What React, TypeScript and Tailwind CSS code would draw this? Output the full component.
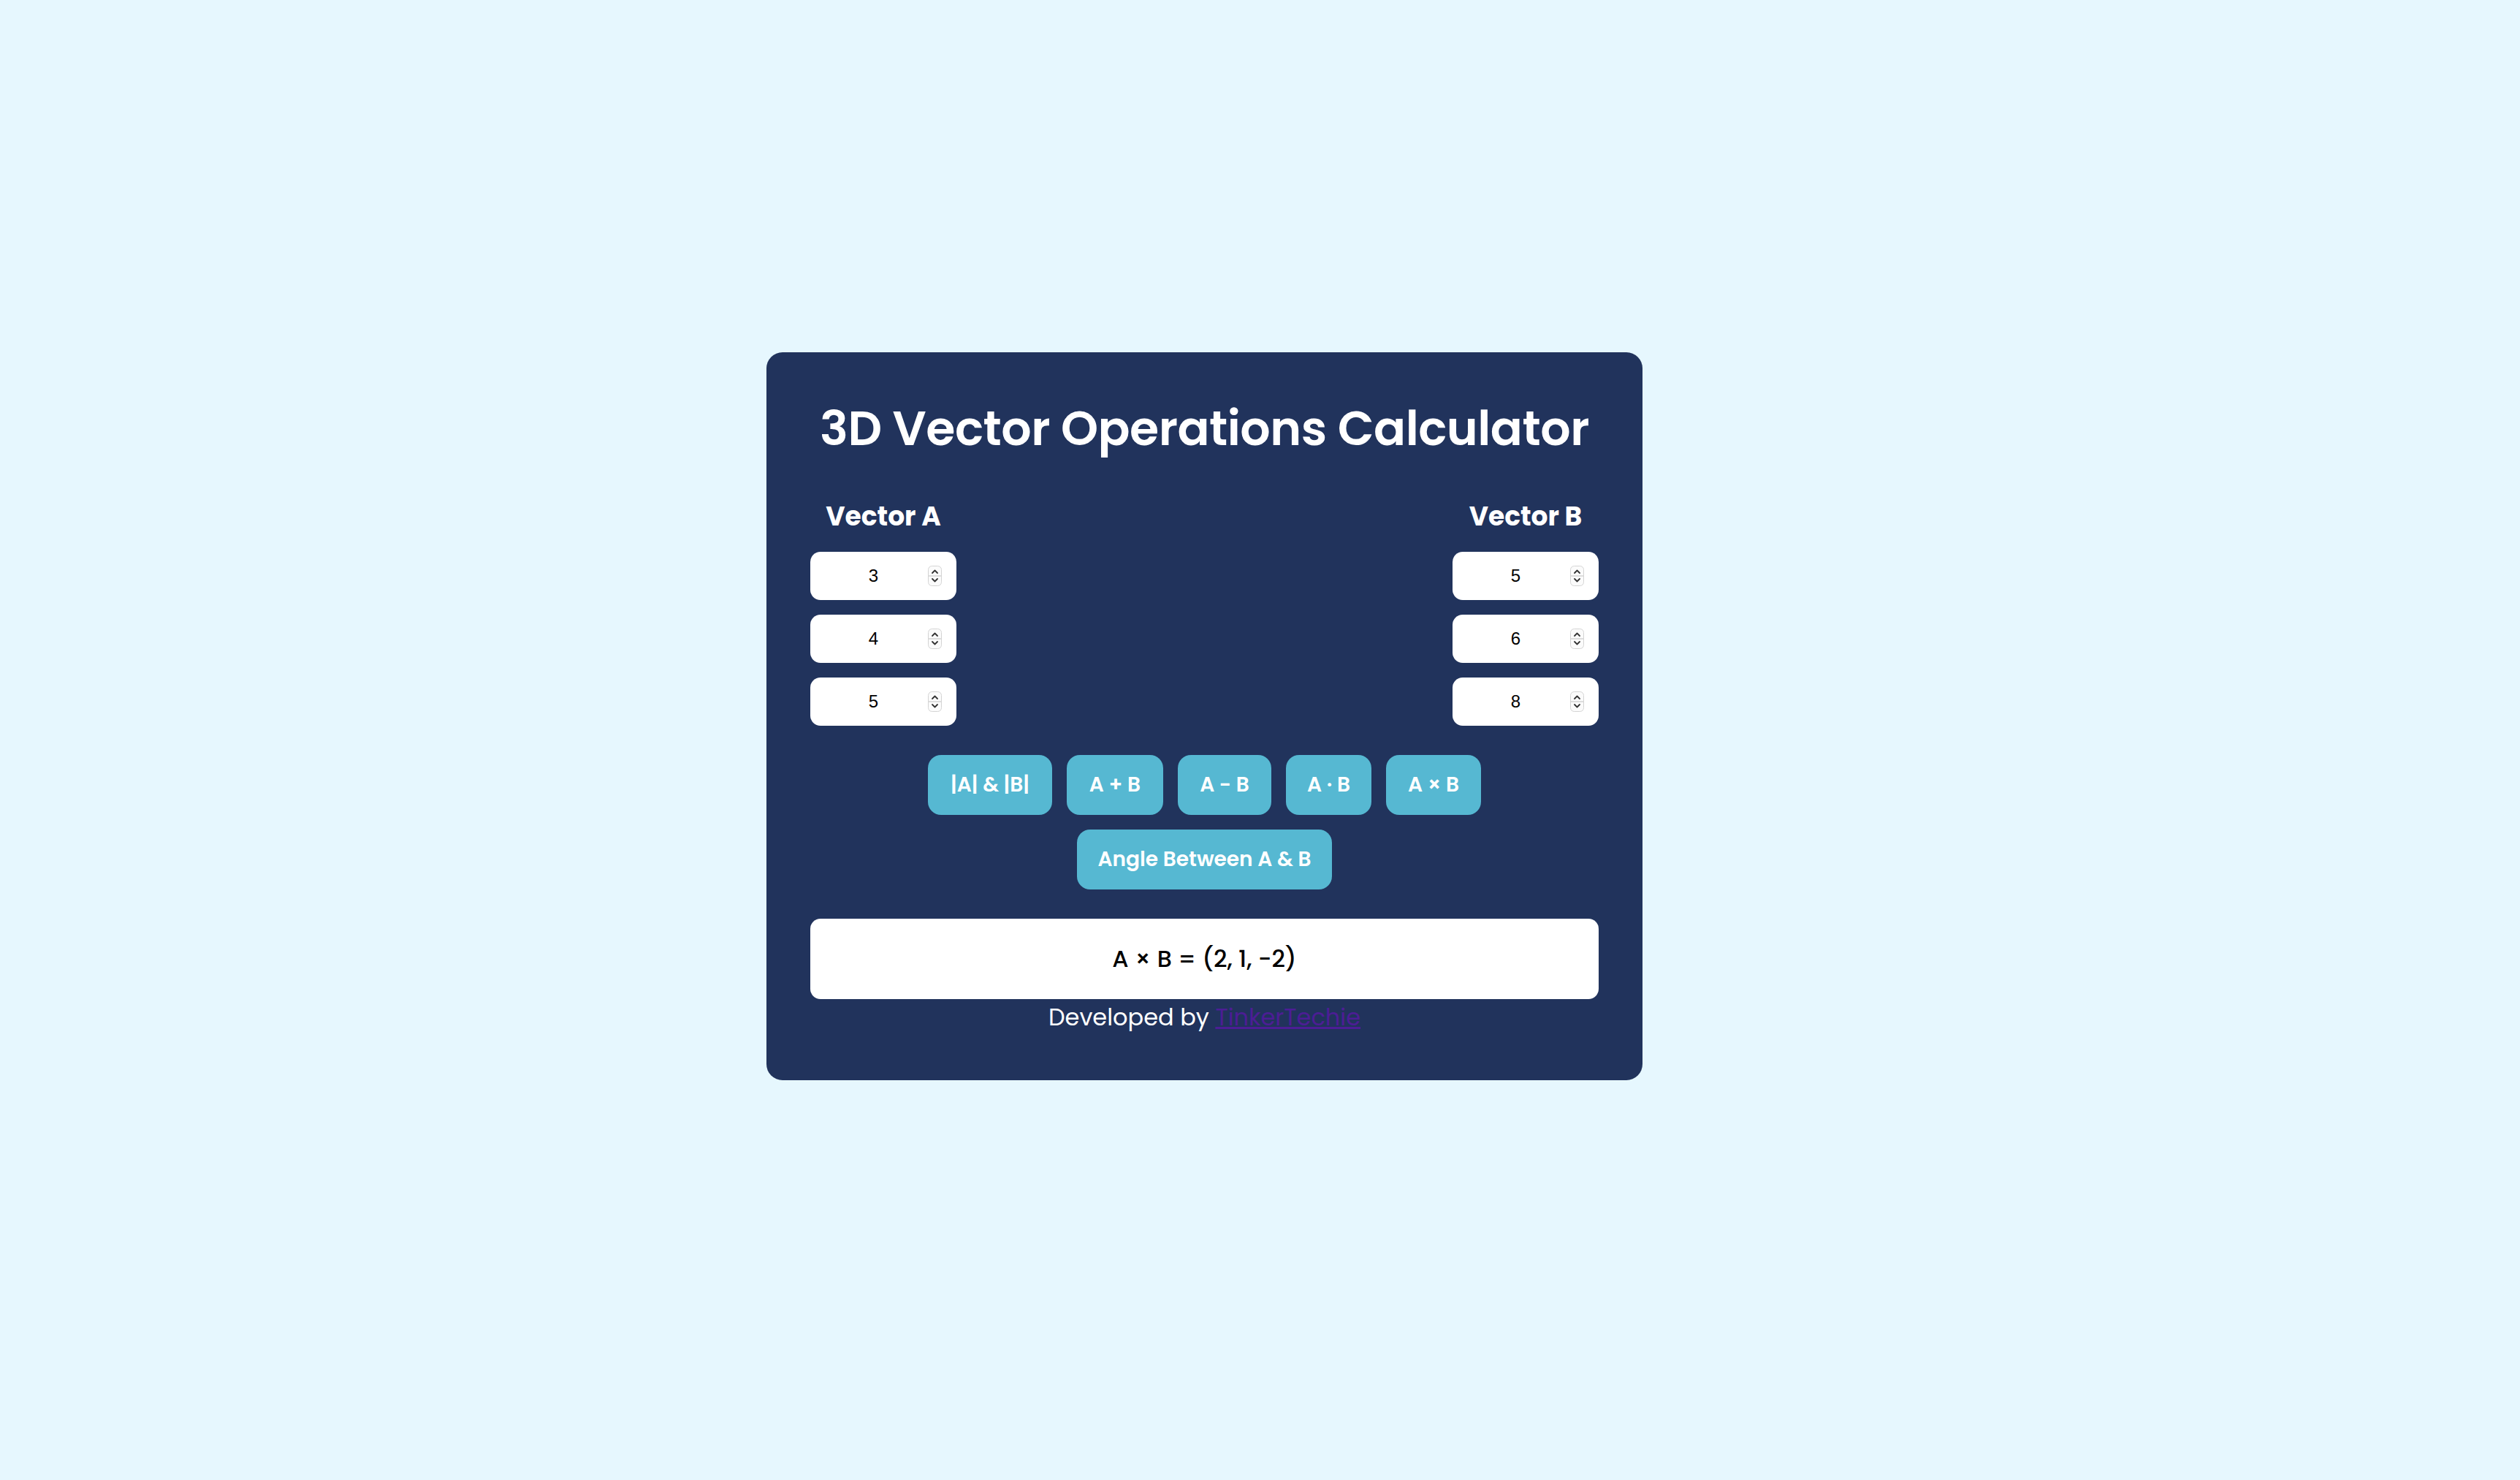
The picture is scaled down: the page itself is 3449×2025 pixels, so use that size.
import { useState } from "react";

type Vec = [number, number, number];

function Spinner() {
  return (
    <svg width="19" height="28" viewBox="0 0 19 28" className="shrink-0">
      <rect x="0.5" y="0.5" width="18" height="27" rx="5" fill="#fbfbfb" stroke="#d4d4d4" />
      <line x1="1" y1="14" x2="18" y2="14" stroke="#d4d4d4" strokeWidth="1.5" />
      <path d="M6 10 L9.5 6.5 L13 10" fill="none" stroke="#333" strokeWidth="1.8" strokeLinecap="round" strokeLinejoin="round" />
      <path d="M6 18 L9.5 21.5 L13 18" fill="none" stroke="#333" strokeWidth="1.8" strokeLinecap="round" strokeLinejoin="round" />
    </svg>
  );
}

function NumberBox({ value, onChange }: { value: string; onChange: (v: string) => void }) {
  return (
    <div className="flex h-[66px] w-[200px] items-center rounded-[14px] bg-white pl-[12px] pr-[20px]">
      <input
        type="text"
        inputMode="numeric"
        value={value}
        onChange={(e) => onChange(e.target.value)}
        className="w-0 flex-1 bg-transparent text-center font-['Liberation_Sans',Arial,sans-serif] text-[24px] text-black outline-none"
      />
      <Spinner />
    </div>
  );
}

function VectorColumn({
  label,
  values,
  onChange,
}: {
  label: string;
  values: string[];
  onChange: (i: number, v: string) => void;
}) {
  return (
    <div className="flex w-[200px] flex-col items-center">
      <h3 className="h-[43px] text-[36px] font-bold leading-[45px] text-white">{label}</h3>
      <div className="mt-[28px] flex flex-col gap-[20px]">
        {values.map((v, i) => (
          <NumberBox key={i} value={v} onChange={(nv) => onChange(i, nv)} />
        ))}
      </div>
    </div>
  );
}

const fmt = (n: number) => String(Math.round(n * 100) / 100);

export default function App() {
  const [a, setA] = useState(["3", "4", "5"]);
  const [b, setB] = useState(["5", "6", "8"]);
  const [result, setResult] = useState("A × B = (2, 1, -2)");

  const va = a.map(Number) as Vec;
  const vb = b.map(Number) as Vec;
  const mag = (v: Vec) => Math.sqrt(v[0] * v[0] + v[1] * v[1] + v[2] * v[2]);
  const dot = va[0] * vb[0] + va[1] * vb[1] + va[2] * vb[2];

  const ops: { label: string; width: string; run: () => string }[] = [
    {
      label: "|A| & |B|",
      width: "w-[170px]",
      run: () => `|A| = ${fmt(mag(va))}, |B| = ${fmt(mag(vb))}`,
    },
    {
      label: "A + B",
      width: "w-[132px]",
      run: () => `A + B = (${va.map((x, i) => fmt(x + vb[i])).join(", ")})`,
    },
    {
      label: "A - B",
      width: "w-[128px]",
      run: () => `A - B = (${va.map((x, i) => fmt(x - vb[i])).join(", ")})`,
    },
    {
      label: "A · B",
      width: "w-[117px]",
      run: () => `A · B = ${fmt(dot)}`,
    },
    {
      label: "A × B",
      width: "w-[130px]",
      run: () => {
        const c = [
          va[1] * vb[2] - va[2] * vb[1],
          va[2] * vb[0] - va[0] * vb[2],
          va[0] * vb[1] - va[1] * vb[0],
        ];
        return `A × B = (${c.map(fmt).join(", ")})`;
      },
    },
    {
      label: "Angle Between A & B",
      width: "w-[349px]",
      run: () => {
        const deg = (Math.acos(dot / (mag(va) * mag(vb))) * 180) / Math.PI;
        return `Angle = ${fmt(deg)}°`;
      },
    },
  ];

  return (
    <div className="flex min-h-screen w-full justify-center bg-[#e6f7fe] pr-[152px] pt-[482px] font-['Poppins','Inter',sans-serif]">
      <div className="h-fit w-[1199px] rounded-[22px] bg-[#21335c] px-[60px] pb-[67px] pt-[63px]">
        <h1 className="whitespace-nowrap text-center text-[65px] font-semibold leading-[84px] tracking-[-0.5px] text-white">
          3D Vector Operations Calculator
        </h1>

        {/* Inputs */}
        <div className="mt-[55px] flex justify-between">
          <VectorColumn
            label="Vector A"
            values={a}
            onChange={(i, v) => setA((prev) => prev.map((x, j) => (j === i ? v : x)))}
          />
          <VectorColumn
            label="Vector B"
            values={b}
            onChange={(i, v) => setB((prev) => prev.map((x, j) => (j === i ? v : x)))}
          />
        </div>

        {/* Operation buttons */}
        <div className="mt-[40px] flex flex-wrap justify-center gap-[20px]">
          {ops.map((op) => (
            <button
              key={op.label}
              onClick={() => setResult(op.run())}
              className={`${op.width} h-[82px] rounded-[18px] bg-[#56b8d2] text-[28px] font-semibold text-white`}
            >
              {op.label}
            </button>
          ))}
        </div>

        {/* Result */}
        <div className="mt-[40px] flex h-[110px] items-center justify-center rounded-[14px] bg-white text-[32px] font-medium text-black">
          {result}
        </div>

        <p className="mt-[6px] text-center text-[32px] leading-[38px] text-white">
          Developed by{" "}
          <a href="#" className="text-[#4c1d95] underline">
            TinkerTechie
          </a>
        </p>
      </div>
    </div>
  );
}
